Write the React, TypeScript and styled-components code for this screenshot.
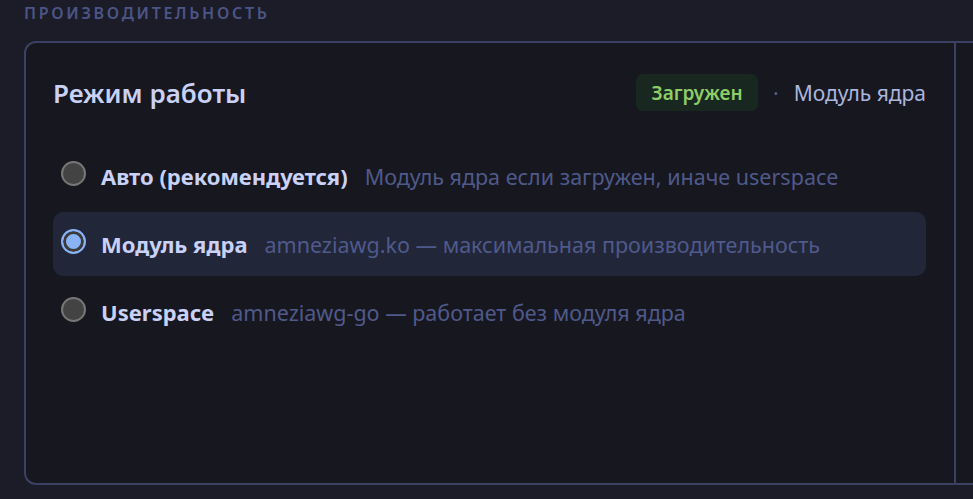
import React from 'react';
import styled, { createGlobalStyle } from 'styled-components';

const GlobalStyle = createGlobalStyle`
  html, body {
    margin: 0;
    padding: 0;
    background: #1c1c28;
    overflow: hidden;
  }

  body {
    font-family: 'Noto Sans', 'Open Sans', sans-serif;
    color: #c9d1f7;
  }
`;

const Page = styled.div`
  padding: 3px 0 0 24px;
  width: 1400px;
`;

const SectionTitle = styled.h2`
  margin: 0 0 18px;
  font-size: 16px;
  line-height: 20px;
  font-weight: 600;
  letter-spacing: 2.7px;
  text-transform: uppercase;
  color: #4b5586;
`;

const Card = styled.div`
  display: flex;
  height: 444px;
  box-sizing: border-box;
  border: 2px solid #3a4163;
  border-radius: 12px 0 0 12px;
  background: #17171f;
`;

const MainPane = styled.div`
  width: 930px;
  box-sizing: border-box;
  padding: 31px 28px 0 27px;
  border-right: 2px solid #3a4163;
`;

const SidePane = styled.div`
  flex: 1;
`;

const Header = styled.div`
  display: flex;
  align-items: center;
  justify-content: space-between;
  height: 37px;
  margin-bottom: 33px;
`;

const Title = styled.h3`
  margin: 0;
  font-size: 26px;
  font-weight: 600;
  color: #c9d1f7;
`;

const Status = styled.div`
  display: flex;
  align-items: center;
  gap: 15px;
  font-size: 21px;
`;

const Badge = styled.span`
  display: inline-flex;
  align-items: center;
  justify-content: center;
  width: 122px;
  height: 37px;
  border-radius: 7px;
  background: #182820;
  color: #8fcd67;
  font-weight: 600;
  font-size: 19px;
`;

const Dot = styled.span`
  color: #5a6184;
`;

const Mode = styled.span`
  color: #aab6de;
`;

const Options = styled.div`
  display: flex;
  flex-direction: column;
  gap: 4px;
`;

const Option = styled.label<{ $active?: boolean }>`
  display: flex;
  align-items: center;
  gap: 15px;
  height: 64px;
  padding: 0 8px;
  border-radius: 10px;
  background: ${(p) => (p.$active ? '#222639' : 'transparent')};
  cursor: pointer;
`;

const Radio = styled.span<{ $checked?: boolean }>`
  flex: none;
  width: 25px;
  height: 25px;
  margin-top: -6px;
  box-sizing: border-box;
  border-radius: 50%;
  border: 2px solid ${(p) => (p.$checked ? '#8ab2f6' : '#777777')};
  background: ${(p) => (p.$checked ? '#8ab2f6' : '#434343')};
  box-shadow: ${(p) => (p.$checked ? 'inset 0 0 0 3px #3b3b3b' : 'none')};
`;

const Label = styled.span`
  font-size: 22px;
  font-weight: 700;
  color: #c9d1f7;
`;

const Hint = styled.span`
  margin-left: 2px;
  font-size: 21.5px;
  color: #4f5a8b;
`;

const modes = [
  { label: 'Авто (рекомендуется)', hint: 'Модуль ядра если загружен, иначе userspace' },
  { label: 'Модуль ядра', hint: 'amneziawg.ko — максимальная производительность', active: true },
  { label: 'Userspace', hint: 'amneziawg-go — работает без модуля ядра' },
];

export default function App() {
  return (
    <Page>
      <GlobalStyle />
      <SectionTitle>Производительность</SectionTitle>
      <Card>
        <MainPane>
          <Header>
            <Title>Режим работы</Title>
            <Status>
              <Badge>Загружен</Badge>
              <Dot>·</Dot>
              <Mode>Модуль ядра</Mode>
            </Status>
          </Header>
          <Options>
            {modes.map((m) => (
              <Option key={m.label} $active={m.active}>
                <Radio $checked={m.active} />
                <Label>{m.label}</Label>
                <Hint>{m.hint}</Hint>
              </Option>
            ))}
          </Options>
        </MainPane>
        <SidePane />
      </Card>
    </Page>
  );
}
